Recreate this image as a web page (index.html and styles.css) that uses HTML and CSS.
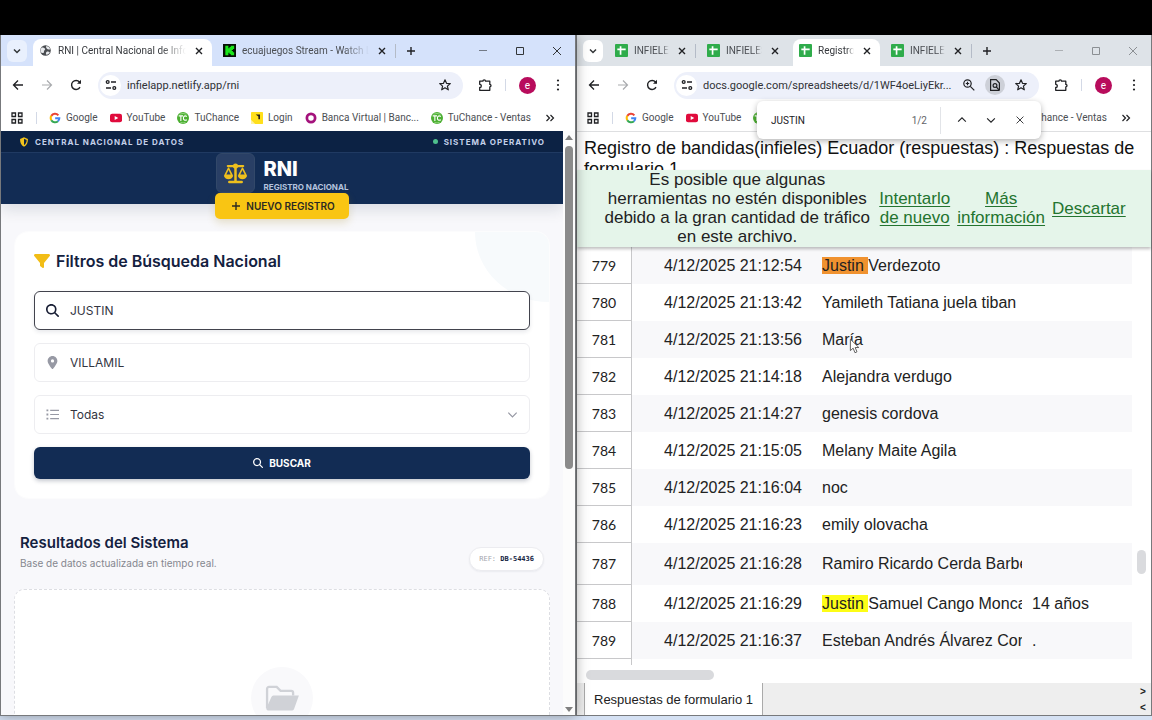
FILE: index.html
```html
<!DOCTYPE html>
<html lang="es">
<head>
    <meta charset="UTF-8">
    <meta name="viewport" content="width=device-width, initial-scale=1.0">
    <title>RNI | Central Nacional de Información</title>
    <link rel="stylesheet" href="styles.css">
</head>
<body>
    <!-- Iconos compartidos -->
    <svg class="sprite" aria-hidden="true">
        <symbol id="i-close" viewBox="0 0 14 14"><path d="M4 4l6 6M10 4l-6 6" fill="none" stroke="currentColor" stroke-width="1.4"/></symbol>
        <symbol id="i-plus" viewBox="0 0 14 14"><path d="M7 3v8M3 7h8" fill="none" stroke="currentColor" stroke-width="1.4"/></symbol>
        <symbol id="i-down" viewBox="0 0 14 14"><path d="M4 5.500l3 3 3-3" fill="none" stroke="currentColor" stroke-width="1.500"/></symbol>
        <symbol id="i-chevron" viewBox="0 0 14 14"><path d="M2.500 5l4.500 4.500L11.500 5" fill="none" stroke="currentColor" stroke-width="1.300"/></symbol>
        <symbol id="i-min" viewBox="0 0 14 14"><path d="M3 6.500h8" stroke="currentColor" opacity=".6"/></symbol>
        <symbol id="i-max" viewBox="0 0 14 14"><path d="M3.500 3.500h7v7h-7z" fill="none" stroke="currentColor"/></symbol>
        <symbol id="i-x" viewBox="0 0 14 14"><path d="M3 3l8 8M11 3l-8 8" fill="none" stroke="currentColor"/></symbol>
        <symbol id="i-back" viewBox="0 0 14 14"><path d="M12 7H3M7 2.500L2.500 7 7 11.500" fill="none" stroke="currentColor" stroke-width="1.300"/></symbol>
        <symbol id="i-forward" viewBox="0 0 14 14"><path d="M2 7h9M7 2.500L11.500 7 7 11.500" fill="none" stroke="currentColor" stroke-width="1.200"/></symbol>
        <symbol id="i-reload" viewBox="0 0 14 14"><path d="M11 9.200A4.500 4.500 0 1 1 10.500 4L11.500 5" fill="none" stroke="currentColor" stroke-width="1.400"/><path d="M12 1.800v4H8z" fill="currentColor"/></symbol>
        <symbol id="i-tune" viewBox="0 0 14 14"><g fill="none" stroke="currentColor" stroke-width="1.300"><circle cx="3.700" cy="4" r="1.400"/><path d="M7 4h5M2 10h5"/><circle cx="10.300" cy="10" r="1.400"/></g></symbol>
        <symbol id="i-star" viewBox="0 0 14 14"><path d="M7 1.800l1.500 3.500 3.800.300-2.900 2.500.900 3.700L7 9.800l-3.300 2 .900-3.700L1.700 5.600l3.800-.300z" fill="none" stroke="currentColor" stroke-width="1.200" stroke-linejoin="round"/></symbol>
        <symbol id="i-ext" viewBox="0 0 14 14"><path d="M1.700 3.200h3.200a1.300 1.300 0 0 1 2.600 0h4.300v3.200a1.200 1.200 0 0 1 0 2.400v3.500H1.700V9.500a1.600 1.600 0 0 0 0-3.200z" fill="none" stroke="currentColor" stroke-width="1.300" stroke-linejoin="round"/></symbol>
        <symbol id="i-dots" viewBox="0 0 14 14"><g fill="currentColor"><circle cx="7" cy="2.500" r="1.100"/><circle cx="7" cy="7" r="1.100"/><circle cx="7" cy="11.500" r="1.100"/></g></symbol>
        <symbol id="i-zoom" viewBox="0 0 14 14"><g fill="none" stroke="currentColor" stroke-width="1.200"><circle cx="5.500" cy="5.500" r="3.700"/><path d="M8.300 8.300l4 4M5.500 3.800v3.400M3.800 5.500h3.400"/></g></symbol>
        <symbol id="i-find" viewBox="0 0 14 14"><g fill="none" stroke="currentColor" stroke-width="1.200"><path d="M11 12.400H2.600V1.600h5.600L11.400 5v7.400"/><circle cx="7" cy="7.500" r="1.900"/><path d="M8.400 9l3 3.400"/></g></symbol>
        <symbol id="i-apps" viewBox="0 0 14 14"><path d="M2 2h3.500v3.500H2zM8.500 2H12v3.500H8.500zM2 8.500h3.500V12H2zM8.500 8.500H12V12H8.500z" fill="none" stroke="currentColor" stroke-width="1.300"/></symbol>
        <symbol id="i-more" viewBox="0 0 14 14"><path d="M3.500 4l3 3-3 3M7.500 4l3 3-3 3" fill="none" stroke="currentColor" stroke-width="1.200"/></symbol>
        <symbol id="i-globe" viewBox="0 0 14 14"><circle cx="7" cy="7" r="5.700" fill="#4a4d51"/><path d="M3 3.800c1.500.2 3 .2 3.600 1.400S5 7 5.300 8.300 4 10 2 9.200C1.300 7 1.600 5 3 3.800zM8 2.200c2 .3 3.500 1.700 4 3.400-1.500.5-3 .2-3.700-.8S7.300 3 8 2.200zM8 8.500c1.400-.9 2.600-.3 3.600.3-.6 1.400-1.900 2.500-3.600 2.900-.6-1-.8-2.400 0-3.200z" fill="#e8eaed"/></symbol>
        <symbol id="i-kick" viewBox="0 0 14 14"><path d="M0 0h14v14H0z" fill="#061006"/><path d="M2.500 2h3.300v2.600H7V3.300h1.300V2h3.700v3.300h-1.300v1.100H9.500v1.200h1.200v1.200H12V12H8.300v-1.300H7V9.400H5.800V12H2.500z" fill="#19e51b"/></symbol>
        <symbol id="i-sheets" viewBox="0 0 14 14"><rect width="14" height="14" rx="1" fill="#2fac4b"/><path d="M2.500 5.800h9M6 2.500v9" stroke="#fff" stroke-width="1.800"/></symbol>
        <symbol id="i-google" viewBox="0 0 14 14"><g fill="none" stroke-width="2.400"><path d="M10.900 3.900A5 5 0 0 0 2.700 4.500" stroke="#ea4335"/><path d="M2.700 4.500a5 5 0 0 0 0 5" stroke="#fbbc05"/><path d="M2.700 9.500a5 5 0 0 0 7.700 1.200" stroke="#34a853"/><path d="M10.400 10.700A5 5 0 0 0 12 7.200H7.200" stroke="#4285f4"/></g></symbol>
        <symbol id="i-youtube" viewBox="0 0 14 14"><rect y="2" width="14" height="10" rx="2.500" fill="#e00b3c"/><path d="M5.500 4.700v4.600L9.600 7z" fill="#fff"/></symbol>
        <symbol id="i-tc" viewBox="0 0 14 14"><circle cx="7" cy="7" r="7" fill="#4caf32"/><g fill="none" stroke="#fff" stroke-width="1.300"><path d="M2 4.500h5M4.500 4.500v6M11.500 5.200c-3-1.600-4 .2-4 2s1.400 3.300 4 1.800"/></g><path d="M3 2.600q4-2 8 0M4 12q3 1.400 6 0" fill="none" stroke="#b4e5a4" stroke-width=".700"/></symbol>
        <symbol id="i-login" viewBox="0 0 14 14"><rect width="14" height="14" rx="1" fill="#ffdf1b"/><path d="M5.500 3h5v5.500H8.600V5.200z" fill="#28231a"/><path d="M0 9l5 5H0z" fill="#fff3a0"/></symbol>
        <symbol id="i-ring" viewBox="0 0 14 14"><circle cx="7" cy="7" r="4.800" fill="none" stroke="#a4127c" stroke-width="3.200"/></symbol>
        <symbol id="i-search" viewBox="0 0 512 512"><path fill="currentColor" d="M416 208c0 45.900-14.900 88.300-40 122.700L502.600 457.400c12.500 12.500 12.500 32.800 0 45.300s-32.800 12.500-45.300 0L330.700 376c-34.400 25.200-76.800 40-122.700 40C93.100 416 0 322.900 0 208S93.100 0 208 0S416 93.100 416 208zM208 352a144 144 0 1 0 0-288 144 144 0 1 0 0 288z"/></symbol>
        <symbol id="i-pin" viewBox="0 0 384 512"><path fill="currentColor" d="M215.700 499.200C267 435 384 279.400 384 192C384 86 298 0 192 0S0 86 0 192c0 87.400 117 243 168.300 307.200c12.300 15.300 35.100 15.300 47.400 0zM192 128a64 64 0 1 1 0 128 64 64 0 1 1 0-128z"/></symbol>
        <symbol id="i-list" viewBox="0 0 14 14"><path d="M4.500 2.500H14M4.500 7H14M4.500 11.500H14" stroke="currentColor" stroke-width="1.200"/><path d="M.5 1.500h2v2h-2zM.5 6h2v2h-2zM.5 10.500h2v2h-2z" fill="currentColor"/></symbol>
        <symbol id="i-filter" viewBox="0 0 512 512"><path fill="currentColor" d="M3.900 54.900C10.500 40.900 24.500 32 40 32H472c15.500 0 29.500 8.900 36.100 22.900s4.600 30.500-5.200 42.500L320 320.900V448c0 12.100-6.800 23.200-17.700 28.600s-23.800 4.300-33.500-3l-64-48c-8.100-6-12.800-15.500-12.800-25.600V320.900L9 97.300C-.7 85.400-2.800 68.800 3.900 54.900z"/></symbol>
        <symbol id="i-shield" viewBox="0 0 14 14"><path d="M7 .5l5.500 2.200C12.600 8 11 11.500 7 13.600 3 11.500 1.400 8 1.500 2.700z" fill="#f2c31b"/><path d="M7 2.600l3.700 1.500c-.1 3.500-1.200 5.600-3.700 7.200z" fill="#0c2244"/></symbol>
        <symbol id="i-scales" viewBox="0 0 26 22"><g fill="none" stroke="currentColor" stroke-linecap="round" stroke-linejoin="round"><path d="M5 3.200h16" stroke-width="2.400"/><path d="M13 3v16M6.500 19.800h13" stroke-width="2.600"/><path d="M5.700 5.500L2 13h7.400zM20.300 5.500L16.600 13H24z" stroke-width="1.700"/></g><circle cx="13" cy="3.200" r="2.700" fill="currentColor"/><path d="M.8 13h9.800c-.4 2.500-2.400 3.900-4.900 3.900S1.200 15.500.8 13zM15.400 13h9.800c-.4 2.500-2.400 3.900-4.900 3.900s-4.500-1.400-4.900-3.900z" fill="currentColor"/></symbol>
        <symbol id="i-folder" viewBox="0 0 36 28"><path d="M2 24V4a2 2 0 0 1 2-2h8l4 4h11a2 2 0 0 1 2 2v3" fill="none" stroke="currentColor" stroke-width="2.400"/><path d="M8.500 11H35l-5 14a2 2 0 0 1-2 1.500H3a2 2 0 0 1-1.500-3l5-11a3 3 0 0 1 2-1.500z" fill="currentColor"/></symbol>
    </svg>

    <div class="screen-top"></div>

    <main class="desktop">
        <!-- Ventana izquierda -->
        <section class="window window-front">
            <div class="tab-strip">
                <button class="tab-search" aria-label="Buscar pestañas"><svg class="icon"><use href="#i-down"/></svg></button>
                <div class="tab active">
                    <svg class="favicon"><use href="#i-globe"/></svg>
                    <span class="tab-title">RNI | Central Nacional de Infor</span>
                    <button class="tab-close" aria-label="Cerrar"><svg class="icon"><use href="#i-close"/></svg></button>
                </div>
                <div class="tab last">
                    <svg class="favicon"><use href="#i-kick"/></svg>
                    <span class="tab-title">ecuajuegos Stream - Watch Live</span>
                    <button class="tab-close" aria-label="Cerrar"><svg class="icon"><use href="#i-close"/></svg></button>
                </div>
                <button class="new-tab" aria-label="Nueva pestaña"><svg class="icon"><use href="#i-plus"/></svg></button>
                <div class="window-controls">
                    <button aria-label="Minimizar"><svg class="icon"><use href="#i-min"/></svg></button>
                    <button aria-label="Maximizar"><svg class="icon"><use href="#i-max"/></svg></button>
                    <button aria-label="Cerrar ventana"><svg class="icon"><use href="#i-x"/></svg></button>
                </div>
            </div>

            <div class="toolbar">
                <button aria-label="Atrás"><svg class="icon"><use href="#i-back"/></svg></button>
                <button class="dim" aria-label="Adelante"><svg class="icon"><use href="#i-forward"/></svg></button>
                <button aria-label="Recargar"><svg class="icon"><use href="#i-reload"/></svg></button>
                <div class="omnibox">
                    <button class="site-info" aria-label="Información del sitio"><svg class="icon"><use href="#i-tune"/></svg></button>
                    <input class="url" type="text" aria-label="Dirección" value="infielapp.netlify.app/rni">
                    <button aria-label="Favorito"><svg class="icon"><use href="#i-star"/></svg></button>
                </div>
                <button aria-label="Extensiones"><svg class="icon"><use href="#i-ext"/></svg></button>
                <span class="divider"></span>
                <button class="avatar">e</button>
                <button aria-label="Menú"><svg class="icon"><use href="#i-dots"/></svg></button>
            </div>

            <nav class="bookmarks">
                <button aria-label="Aplicaciones"><svg class="icon"><use href="#i-apps"/></svg></button>
                <span class="divider"></span>
                <a href="#"><svg class="bm-icon"><use href="#i-google"/></svg>Google</a>
                <a href="#"><svg class="bm-icon"><use href="#i-youtube"/></svg>YouTube</a>
                <a href="#"><svg class="bm-icon"><use href="#i-tc"/></svg>TuChance</a>
                <a href="#"><svg class="bm-icon"><use href="#i-login"/></svg>Login</a>
                <a href="#"><svg class="bm-icon"><use href="#i-ring"/></svg>Banca Virtual | Banc...</a>
                <a href="#"><svg class="bm-icon"><use href="#i-tc"/></svg>TuChance - Ventas</a>
                <button class="more" aria-label="Más marcadores"><svg class="icon"><use href="#i-more"/></svg></button>
            </nav>

            <div class="page">
                <div class="rni">
                    <header class="rni-header">
                        <div class="rni-topbar">
                            <span class="topbar-item"><svg class="shield"><use href="#i-shield"/></svg>CENTRAL NACIONAL DE DATOS</span>
                            <span class="topbar-item"><i class="status-dot"></i>SISTEMA OPERATIVO</span>
                        </div>
                        <div class="brand">
                            <div class="brand-logo"><svg><use href="#i-scales"/></svg></div>
                            <div>
                                <h1>RNI</h1>
                                <p>REGISTRO NACIONAL</p>
                            </div>
                        </div>
                        <button class="new-record"><svg class="icon"><use href="#i-plus"/></svg>NUEVO REGISTRO</button>
                    </header>

                    <form class="filters">
                        <h2><svg><use href="#i-filter"/></svg>Filtros de Búsqueda Nacional</h2>
                        <label class="field focused">
                            <svg><use href="#i-search"/></svg>
                            <input type="text" aria-label="Nombre" value="JUSTIN">
                        </label>
                        <label class="field">
                            <svg><use href="#i-pin"/></svg>
                            <input type="text" aria-label="Ciudad" value="VILLAMIL">
                        </label>
                        <label class="field">
                            <svg><use href="#i-list"/></svg>
                            <select aria-label="Categoría"><option>Todas</option></select>
                            <svg class="caret"><use href="#i-chevron"/></svg>
                        </label>
                        <button class="search-btn" type="button"><svg><use href="#i-search"/></svg>BUSCAR</button>
                    </form>

                    <div class="results-head">
                        <div>
                            <h3>Resultados del Sistema</h3>
                            <p>Base de datos actualizada en tiempo real.</p>
                        </div>
                        <span class="ref">REF: <b>DB-54436</b></span>
                    </div>
                    <div class="empty-state">
                        <div class="empty-icon"><svg><use href="#i-folder"/></svg></div>
                    </div>
                </div>
                <div class="scrollbar">
                    <i class="arrow-up"></i>
                    <i class="thumb"></i>
                    <i class="arrow-down"></i>
                </div>
            </div>
        </section>

        <!-- Ventana derecha -->
        <section class="window window-back">
            <div class="tab-strip">
                <button class="tab-search" aria-label="Buscar pestañas"><svg class="icon"><use href="#i-down"/></svg></button>
                <div class="tab small separated">
                    <svg class="favicon"><use href="#i-sheets"/></svg>
                    <span class="tab-title">INFIELES</span>
                    <button class="tab-close" aria-label="Cerrar"><svg class="icon"><use href="#i-close"/></svg></button>
                </div>
                <div class="tab small">
                    <svg class="favicon"><use href="#i-sheets"/></svg>
                    <span class="tab-title">INFIELES</span>
                    <button class="tab-close" aria-label="Cerrar"><svg class="icon"><use href="#i-close"/></svg></button>
                </div>
                <div class="tab small active">
                    <svg class="favicon"><use href="#i-sheets"/></svg>
                    <span class="tab-title">Registro</span>
                    <button class="tab-close" aria-label="Cerrar"><svg class="icon"><use href="#i-close"/></svg></button>
                </div>
                <div class="tab small last">
                    <svg class="favicon"><use href="#i-sheets"/></svg>
                    <span class="tab-title">INFIELES</span>
                    <button class="tab-close" aria-label="Cerrar"><svg class="icon"><use href="#i-close"/></svg></button>
                </div>
                <button class="new-tab" aria-label="Nueva pestaña"><svg class="icon"><use href="#i-plus"/></svg></button>
                <div class="window-controls">
                    <button aria-label="Minimizar"><svg class="icon"><use href="#i-min"/></svg></button>
                    <button aria-label="Maximizar"><svg class="icon"><use href="#i-max"/></svg></button>
                    <button aria-label="Cerrar ventana"><svg class="icon"><use href="#i-x"/></svg></button>
                </div>
            </div>

            <div class="toolbar">
                <button aria-label="Atrás"><svg class="icon"><use href="#i-back"/></svg></button>
                <button class="dim" aria-label="Adelante"><svg class="icon"><use href="#i-forward"/></svg></button>
                <button aria-label="Recargar"><svg class="icon"><use href="#i-reload"/></svg></button>
                <div class="omnibox">
                    <button class="site-info" aria-label="Información del sitio"><svg class="icon"><use href="#i-tune"/></svg></button>
                    <input class="url" type="text" aria-label="Dirección" value="docs.google.com/spreadsheets/d/1WF4oeLiyEkr...">
                    <button aria-label="Zoom"><svg class="icon"><use href="#i-zoom"/></svg></button>
                    <button class="pressed" aria-label="Buscar en la página"><svg class="icon"><use href="#i-find"/></svg></button>
                    <button aria-label="Favorito"><svg class="icon"><use href="#i-star"/></svg></button>
                </div>
                <button aria-label="Extensiones"><svg class="icon"><use href="#i-ext"/></svg></button>
                <span class="divider"></span>
                <button class="avatar">e</button>
                <button aria-label="Menú"><svg class="icon"><use href="#i-dots"/></svg></button>
            </div>

            <nav class="bookmarks">
                <button aria-label="Aplicaciones"><svg class="icon"><use href="#i-apps"/></svg></button>
                <span class="divider"></span>
                <a href="#"><svg class="bm-icon"><use href="#i-google"/></svg>Google</a>
                <a href="#"><svg class="bm-icon"><use href="#i-youtube"/></svg>YouTube</a>
                <a href="#"><svg class="bm-icon"><use href="#i-tc"/></svg>TuChance</a>
                <a href="#"><svg class="bm-icon"><use href="#i-login"/></svg>Login</a>
                <a href="#"><svg class="bm-icon"><use href="#i-ring"/></svg>Banca Virtual | Banc...</a>
                <a href="#"><svg class="bm-icon"><use href="#i-tc"/></svg>TuChance - Ventas</a>
                <button class="more" aria-label="Más marcadores"><svg class="icon"><use href="#i-more"/></svg></button>
            </nav>

            <div class="find-bar">
                <input type="text" aria-label="Buscar" value="JUSTIN">
                <span class="find-count">1/2</span>
                <button aria-label="Anterior"><svg class="icon flip"><use href="#i-chevron"/></svg></button>
                <button aria-label="Siguiente"><svg class="icon"><use href="#i-chevron"/></svg></button>
                <button aria-label="Cerrar búsqueda"><svg class="icon"><use href="#i-x"/></svg></button>
            </div>

            <div class="sheet">
                <h1 class="sheet-title">Registro de bandidas(infieles) Ecuador (respuestas) : Respuestas de formulario 1</h1>
                <div class="banner">
                    <p>Es posible que algunas herramientas no estén disponibles debido a la gran cantidad de tráfico en este archivo.</p>
                    <a href="#">Intentarlo<br>de nuevo</a>
                    <a href="#">Más<br>información</a>
                    <a href="#">Descartar</a>
                </div>
                <div class="grid-area">
                    <div class="grid-scroll">
                        <table class="grid">
                            <colgroup><col class="col-num"><col class="col-date"><col class="col-name"><col></colgroup>
                            <tbody>
                                <tr><th>779</th><td>4/12/2025 21:12:54</td><td><mark class="current">Justin </mark>Verdezoto</td><td></td></tr>
                                <tr><th>780</th><td>4/12/2025 21:13:42</td><td>Yamileth Tatiana juela tiban</td><td></td></tr>
                                <tr><th>781</th><td>4/12/2025 21:13:56</td><td><span class="hovered">María<svg class="cursor" viewBox="0 0 12 18"><path d="M1.500 1v12.500l3-2.700 2 5 2.200-1-2-4.700h4z" fill="#fff" stroke="#555" stroke-width="1"/></svg></span></td><td></td></tr>
                                <tr><th>782</th><td>4/12/2025 21:14:18</td><td>Alejandra verdugo</td><td></td></tr>
                                <tr><th>783</th><td>4/12/2025 21:14:27</td><td>genesis cordova</td><td></td></tr>
                                <tr><th>784</th><td>4/12/2025 21:15:05</td><td>Melany Maite Agila</td><td></td></tr>
                                <tr><th>785</th><td>4/12/2025 21:16:04</td><td>noc</td><td></td></tr>
                                <tr><th>786</th><td>4/12/2025 21:16:23</td><td>emily olovacha</td><td></td></tr>
                                <tr class="tall"><th>787</th><td>4/12/2025 21:16:28</td><td>Ramiro Ricardo Cerda Barbe</td><td></td></tr>
                                <tr><th>788</th><td>4/12/2025 21:16:29</td><td><mark>Justin </mark>Samuel Cango Monca</td><td>14 años</td></tr>
                                <tr><th>789</th><td>4/12/2025 21:16:37</td><td>Esteban Andrés Álvarez Corn</td><td>.</td></tr>
                                <tr><th></th><td></td><td></td><td></td></tr>
                            </tbody>
                        </table>
                    </div>
                    <div class="v-track"><i></i></div>
                </div>
                <div class="h-track"><i></i></div>
                <div class="sheet-tabs">
                    <button class="sheet-tab">Respuestas de formulario 1</button>
                    <div class="sheet-nav">
                        <button>&gt;</button>
                        <button>&lt;</button>
                    </div>
                </div>
            </div>
        </section>
    </main>

    <footer class="taskbar"></footer>
</body>
</html>
```

FILE: styles.css
```css
:root {
    --navy: #122c54;
    --navy-dark: #0c2244;
    --ink: #14213f;
    --gold: #f9c513;
    --page-bg: #f8f8fb;
    --line: #c8c8ca;
    --chrome-text: #4b4e53;
}

* {
    margin: 0;
    padding: 0;
    box-sizing: border-box;
}

body {
    height: 100vh;
    display: flex;
    flex-direction: column;
    overflow: hidden;
    font-family: Roboto, "Open Sans", sans-serif;
    font-size: 10px;
    color: #202124;
    background-color: #fff;
}

button, input, select {
    font: inherit;
    color: inherit;
    border: none;
    background: none;
    outline: none;
    min-width: 0;
}

button {
    display: flex;
    flex: none;
    align-items: center;
    justify-content: center;
    cursor: pointer;
}

svg {
    display: block;
    flex: none;
}

.sprite {
    display: none;
}

.icon {
    width: 14px;
    height: 14px;
}

.screen-top {
    height: 35px;
    background-color: #000;
}

.taskbar {
    height: 4px;
    background-color: #d5e1f3;
}

.desktop {
    flex: 1;
    min-height: 0;
    display: grid;
    grid-template-columns: 1fr 1fr;
}

/* Ventanas del navegador */
.window {
    position: relative;
    display: flex;
    flex-direction: column;
    min-width: 0;
    min-height: 0;
    border: 1px solid #77797c;
    border-top: none;
}

.window-front {
    z-index: 2;
    box-shadow: 0 0 12px rgba(0, 0, 0, 0.35);
}

.tab-strip {
    height: 31px;
    display: flex;
    align-items: center;
    padding-left: 6px;
    background-color: #d5e2fb;
    color: #333639;
}

.window-back .tab-strip {
    background-color: #dee3e8;
}

.tab-search {
    width: 20px;
    height: 22px;
    margin-right: 6px;
    border-radius: 6px;
    background-color: #e9f0fd;
}

.window-back .tab-search {
    background-color: #fff;
}

.tab {
    position: relative;
    align-self: flex-end;
    flex: none;
    width: 179px;
    height: 27px;
    margin-right: 5px;
    padding: 0 6px 4px 6px;
    display: flex;
    align-items: center;
    gap: 6px;
    color: var(--chrome-text);
}

.tab.small {
    width: 87px;
}

.tab.active {
    background-color: #fff;
    border-radius: 8px 8px 0 0;
    color: #36393d;
}

.tab.last,
.tab.separated {
    border-right: 1px solid #b4bbc7;
    border-image: linear-gradient(transparent 20%, #b4bbc7 20%, #b4bbc7 68%, transparent 68%) 1;
}

.favicon {
    width: 13px;
    height: 13px;
}

.tab-title {
    flex: 1;
    overflow: hidden;
    white-space: nowrap;
    -webkit-mask-image: linear-gradient(to right, #000 80%, transparent);
    mask-image: linear-gradient(to right, #000 80%, transparent);
}

.tab-close,
.new-tab {
    color: #202124;
}

.new-tab {
    margin-left: 3px;
}

.window-controls {
    margin-left: auto;
    display: flex;
}

.window-controls button {
    width: 37px;
    height: 30px;
}

.window-back .window-controls {
    color: #8b8f93;
}

.toolbar {
    height: 38px;
    display: flex;
    align-items: center;
    padding: 0 10px;
    gap: 15px;
    background-color: #fff;
}

.toolbar .dim {
    color: #a9abae;
}

.omnibox {
    flex: 1;
    min-width: 0;
    height: 27px;
    display: flex;
    align-items: center;
    gap: 6px;
    padding: 0 8px 0 2px;
    border-radius: 14px;
    background-color: #edf0fa;
}

.site-info {
    width: 21px;
    height: 21px;
    border-radius: 50%;
    background-color: #fff;
}

.omnibox button:not(.site-info) {
    width: 20px;
    height: 20px;
    border-radius: 50%;
}

.omnibox .pressed {
    background-color: #cdd0d8;
}

.url {
    flex: 1;
    font-size: 11px;
    color: #303236;
}

.divider {
    flex: none;
    width: 1px;
    height: 12px;
    background-color: #d3d9e6;
}

.toolbar .divider {
    margin: 0 -2px;
}

.avatar {
    width: 17px;
    height: 17px;
    border-radius: 50%;
    background-color: #b80c5c;
    color: #fff;
}

.bookmarks {
    height: 27px;
    display: flex;
    align-items: center;
    gap: 12px;
    padding: 0 9px;
    background-color: #fff;
    white-space: nowrap;
    overflow: hidden;
}

.bookmarks a {
    display: flex;
    align-items: center;
    gap: 5px;
    color: var(--chrome-text);
    text-decoration: none;
}

.bookmarks .more {
    margin-left: auto;
    margin-right: 13px;
}

.bm-icon {
    width: 12px;
    height: 12px;
}

/* Pagina RNI */
.page {
    flex: 1;
    min-height: 0;
    display: flex;
}

.rni {
    flex: 1;
    min-width: 0;
    overflow: hidden;
    font-family: Inter, sans-serif;
    background-color: var(--page-bg);
}

.rni-header {
    height: 73px;
    display: flex;
    flex-direction: column;
    align-items: center;
    background-color: var(--navy);
    box-shadow: 0 6px 14px rgba(20, 30, 60, 0.12);
}

.rni-topbar {
    flex: none;
    align-self: stretch;
    height: 22px;
    display: flex;
    justify-content: space-between;
    align-items: center;
    padding: 0 18px;
    border-bottom: 1px solid #203a62;
    background-color: var(--navy-dark);
    color: #c4d1ea;
    font-size: 8px;
    font-weight: 700;
    letter-spacing: 1px;
}

.topbar-item {
    display: flex;
    align-items: center;
    gap: 6px;
}

.shield {
    width: 10px;
    height: 10px;
}

.status-dot {
    width: 5px;
    height: 5px;
    border-radius: 50%;
    background-color: #4fc08d;
}

.brand {
    flex: none;
    display: flex;
    align-items: center;
    gap: 9px;
}

.brand-logo {
    width: 39px;
    height: 40px;
    display: flex;
    align-items: center;
    justify-content: center;
    border: 1px solid #324869;
    border-radius: 6px;
    background-color: #293f65;
    color: #eebf1d;
}

.brand-logo svg {
    width: 25px;
    height: 21px;
}

.brand h1 {
    margin-top: 3px;
    font-size: 20px;
    line-height: 24px;
    font-weight: 800;
    color: #fff;
}

.brand p {
    font-size: 8px;
    line-height: 12px;
    font-weight: 700;
    color: #b5c4df;
}

.new-record {
    height: 26px;
    padding: 0 14px;
    gap: 3px;
    border-radius: 5px;
    background-color: var(--gold);
    box-shadow: 0 4px 8px rgba(160, 130, 20, 0.2);
    color: #2b2a22;
    font-size: 10px;
    font-weight: 600;
}

.filters {
    position: relative;
    margin: 27px 13px 0;
    padding: 19px 19px;
    display: flex;
    flex-direction: column;
    gap: 13px;
    overflow: hidden;
    border: 1px solid #fcfcfd;
    border-radius: 14px;
    background-color: #fff;
}

.filters::before {
    content: "";
    position: absolute;
    top: 0;
    right: 0;
    width: 74px;
    height: 70px;
    border-bottom-left-radius: 100%;
    background-color: #f7fafc;
}

.filters h2 {
    display: flex;
    align-items: center;
    gap: 6px;
    margin-bottom: 7px;
    font-size: 16px;
    line-height: 20px;
    font-weight: 600;
    color: var(--ink);
}

.filters h2 svg {
    width: 16px;
    height: 16px;
    color: #f2bd16;
}

.field {
    position: relative;
    height: 39px;
    padding: 0 10px 0 11px;
    display: flex;
    align-items: center;
    gap: 11px;
    border: 1px solid #ededf0;
    border-radius: 6px;
    background-color: #fff;
    color: #9799a4;
}

.field svg {
    width: 13px;
    height: 13px;
}

.field.focused {
    border-color: #42434d;
    box-shadow: 0 2px 4px rgba(20, 30, 60, 0.1);
    color: #191f35;
}

.field input,
.field select {
    flex: 1;
    align-self: stretch;
    font-size: 12px;
    color: #33353f;
    appearance: none;
}

.search-btn {
    height: 32px;
    gap: 6px;
    border-radius: 6px;
    background-color: var(--navy);
    box-shadow: 0 2px 4px rgba(20, 30, 60, 0.25);
    color: #fff;
    font-size: 10px;
    font-weight: 700;
}

.search-btn svg {
    width: 10px;
    height: 10px;
}

.results-head {
    display: flex;
    justify-content: space-between;
    align-items: flex-end;
    margin: 34px 19px 18px;
}

.results-head h3 {
    font-size: 15px;
    line-height: 20px;
    font-weight: 600;
    color: var(--ink);
}

.results-head p {
    margin-top: 3px;
    font-size: 10px;
    line-height: 15px;
    color: #85878f;
}

.ref {
    height: 24px;
    padding: 0 9px;
    line-height: 22px;
    border: 1px solid #ececf0;
    border-radius: 12px;
    background-color: #fff;
    box-shadow: 0 1px 2px rgba(20, 30, 60, 0.06);
    font-family: "DejaVu Sans Mono", monospace;
    font-size: 7px;
    color: #a4a6ae;
}

.ref b {
    color: var(--ink);
}

.empty-state {
    height: 280px;
    margin: 0 13px;
    padding-top: 77px;
    display: flex;
    justify-content: center;
    border: 1px dashed #dddee3;
    border-radius: 10px;
    background-color: #fff;
}

.empty-icon {
    width: 62px;
    height: 62px;
    display: flex;
    align-items: center;
    justify-content: center;
    border-radius: 50%;
    background-color: #f9f9fb;
    color: #d0d2d7;
}

.empty-icon svg {
    width: 35px;
    height: 27px;
}

.scrollbar {
    width: 12px;
    display: flex;
    flex-direction: column;
    align-items: center;
    padding: 4px 0 3px;
    background-color: #fcfcfc;
}

.arrow-up,
.arrow-down {
    border: 4px solid transparent;
}

.arrow-up {
    border-top: none;
    border-bottom: 5px solid #808080;
}

.arrow-down {
    margin-top: auto;
    border-bottom: none;
    border-top: 5px solid #808080;
}

.scrollbar .thumb {
    width: 8px;
    height: 56%;
    margin-top: 6px;
    border-radius: 4px;
    background-color: #8b8b8b;
}

/* Barra de busqueda del navegador */
.find-bar {
    position: absolute;
    top: 66px;
    right: 110px;
    width: 284px;
    height: 38px;
    padding: 0 14px;
    display: flex;
    align-items: center;
    z-index: 1;
    border-radius: 6px;
    background-color: #fff;
    box-shadow: 0 2px 6px rgba(0, 0, 0, 0.3);
}

.find-bar input {
    flex: 1;
}

.find-count {
    height: 27px;
    line-height: 27px;
    padding-right: 13px;
    margin-right: 6px;
    border-right: 1px solid #e2e4e8;
    color: #5f6368;
}

.find-bar button {
    width: 29px;
    height: 28px;
}

.find-bar button:last-child {
    margin-right: -7px;
}

.find-bar .icon {
    width: 12px;
    height: 12px;
}

.flip {
    transform: rotate(180deg);
}

/* Hoja de calculo */
.sheet {
    flex: 1;
    min-height: 0;
    display: flex;
    flex-direction: column;
    border-top: 1px solid #dedfe1;
    background-color: #fff;
    font-family: "Liberation Sans", Arial, sans-serif;
    color: #222;
}

.sheet-title {
    flex: none;
    height: 38px;
    padding: 6px 7px 0;
    overflow: hidden;
    font-size: 18px;
    line-height: 21px;
    font-weight: 400;
    color: #111;
}

.banner {
    position: relative;
    flex: none;
    display: flex;
    justify-content: center;
    align-items: center;
    gap: 7px;
    padding-bottom: 1px;
    background-color: #e5f5ea;
    box-shadow: 0 2px 3px rgba(0, 0, 0, 0.25);
    font-size: 17px;
    line-height: 19px;
    text-align: center;
}

.banner p {
    flex: none;
    width: 270px;
}

.banner a {
    color: #23742f;
    text-underline-offset: 2px;
}

.grid-area {
    flex: 1;
    min-height: 0;
    display: flex;
}

.grid-scroll {
    flex: 1;
    overflow: hidden;
}

.grid {
    width: 100%;
    table-layout: fixed;
    border-collapse: separate;
    border-spacing: 0;
    font-size: 16px;
}

.col-num {
    width: 55px;
}

.col-date {
    width: 180px;
}

.col-name {
    width: 210px;
}

.grid tr {
    height: 37px;
}

.grid tr.tall {
    height: 42px;
}

.grid th {
    border-right: 1px solid var(--line);
    border-bottom: 1px solid var(--line);
    font-family: Lato, sans-serif;
    font-size: 14px;
    font-weight: 400;
}

.grid td {
    padding-left: 10px;
    overflow: hidden;
    white-space: nowrap;
}

.grid td:nth-child(2) {
    padding: 0 10px 0 0;
    text-align: right;
}

.grid tr:nth-child(odd) td {
    background-color: #f8f8fa;
}

.grid mark {
    background-color: #fdfd17;
    color: inherit;
}

.grid mark.current {
    background-color: #f0922f;
}

.hovered {
    position: relative;
}

.cursor {
    position: absolute;
    left: 27px;
    top: 7px;
    width: 11px;
    height: 17px;
}

.v-track {
    width: 19px;
    display: flex;
    flex-direction: column;
    align-items: center;
    justify-content: flex-end;
    padding-bottom: 91px;
}

.v-track i {
    width: 9px;
    height: 24px;
    border-radius: 5px;
    background-color: #dadbde;
}

.h-track {
    height: 18px;
    padding: 5px 9px;
}

.h-track i {
    display: block;
    width: 128px;
    height: 10px;
    border-radius: 5px;
    background-color: #d9dadd;
}

.sheet-tabs {
    height: 32px;
    display: flex;
    justify-content: space-between;
    padding-left: 7px;
    background-color: #eee;
}

.sheet-tab {
    padding: 0 9px;
    border: solid #aaa;
    border-width: 0 1px;
    background-color: #fff;
    font-size: 13px;
}

.sheet-nav {
    width: 16px;
    font-size: 10px;
    font-weight: 700;
}

.sheet-nav button {
    width: 100%;
    height: 16px;
}
```
